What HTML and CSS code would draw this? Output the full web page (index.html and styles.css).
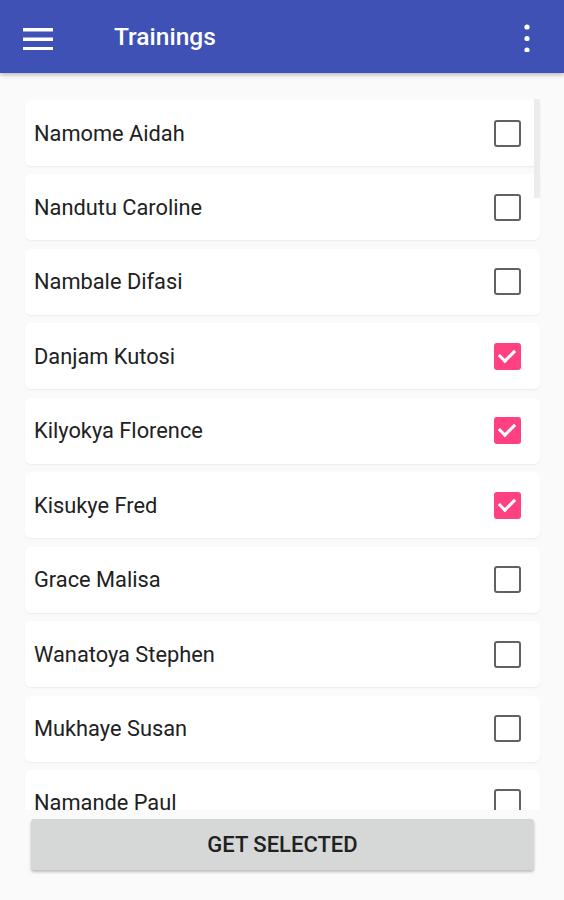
FILE: index.html
```html
<!DOCTYPE html>
<html lang="en">
<head>
    <meta charset="UTF-8">
    <meta name="viewport" content="width=device-width, initial-scale=1.0">
    <title>Trainings</title>
    <link rel="stylesheet" href="styles.css">
</head>
<body>
    <header class="appbar">
        <button class="menu-btn" aria-label="Menu">
            <svg width="30" height="24" viewBox="0 0 30 24">
                <rect x="0" y="2" width="30" height="3.5" fill="#fff"/>
                <rect x="0" y="11.5" width="30" height="3.5" fill="#fff"/>
                <rect x="0" y="21" width="30" height="3.5" fill="#fff"/>
            </svg>
        </button>
        <h1 class="title">Trainings</h1>
        <button class="more-btn" aria-label="More options">
            <svg width="6" height="28" viewBox="0 0 6 28">
                <circle cx="3" cy="3" r="2.6" fill="#fff"/>
                <circle cx="3" cy="14.5" r="2.6" fill="#fff"/>
                <circle cx="3" cy="26" r="2.6" fill="#fff"/>
            </svg>
        </button>
    </header>

    <main class="list">
        <div class="scrollbar"></div>
        <label class="card"><span class="name">Namome Aidah</span><input type="checkbox"><span class="box"></span></label>
        <label class="card"><span class="name">Nandutu Caroline</span><input type="checkbox"><span class="box"></span></label>
        <label class="card"><span class="name">Nambale Difasi</span><input type="checkbox"><span class="box"></span></label>
        <label class="card"><span class="name">Danjam Kutosi</span><input type="checkbox" checked><span class="box"></span></label>
        <label class="card"><span class="name">Kilyokya Florence</span><input type="checkbox" checked><span class="box"></span></label>
        <label class="card"><span class="name">Kisukye Fred</span><input type="checkbox" checked><span class="box"></span></label>
        <label class="card"><span class="name">Grace Malisa</span><input type="checkbox"><span class="box"></span></label>
        <label class="card"><span class="name">Wanatoya Stephen</span><input type="checkbox"><span class="box"></span></label>
        <label class="card"><span class="name">Mukhaye Susan</span><input type="checkbox"><span class="box"></span></label>
        <label class="card"><span class="name">Namande Paul</span><input type="checkbox"><span class="box"></span></label>
    </main>

    <div class="actions">
        <button class="get-btn">GET SELECTED</button>
    </div>
</body>
</html>
```

FILE: styles.css
```css
body {
    margin: 0;
    font-family: Roboto, "Noto Sans", sans-serif;
    background-color: #fafafa;
    width: 564px;
    height: 900px;
    overflow: hidden;
}
.appbar {
    height: 73px;
    background-color: #3f51b5;
    display: flex;
    align-items: center;
    padding: 0 34px 0 23px;
    box-shadow: 0 2px 4px rgba(0,0,0,0.25);
    position: relative;
    z-index: 2;
}
.menu-btn, .more-btn {
    background: none;
    border: none;
    padding: 0;
    display: flex;
    cursor: pointer;
}
.menu-btn {
    margin-top: 2px;
}
.more-btn {
    margin-top: 3px;
}
.title {
    flex: 1;
    margin: 0 0 0 61px;
    color: white;
    font-size: 24.5px;
    font-weight: 500;
}
.list {
    height: 710px;
    padding: 27px 24px 0 25px;
    overflow: hidden;
    display: flex;
    flex-direction: column;
    gap: 8.45px;
    position: relative;
}
.scrollbar {
    position: absolute;
    top: 26px;
    right: 24px;
    width: 6px;
    height: 99px;
    background: #ececec;
}
.card {
    flex: none;
    height: 66px;
    background: white;
    border-radius: 6px;
    box-shadow: 0 1px 2px rgba(0,0,0,0.06);
    display: flex;
    align-items: center;
    padding: 0 19px 0 9px;
    cursor: pointer;
}
.name {
    flex: 1;
    font-size: 21.8px;
    color: #212121;
}
.card input {
    display: none;
}
.box {
    width: 23px;
    height: 23px;
    border: 2.5px solid #616161;
    border-radius: 3px;
    position: relative;
}
.card input:checked + .box {
    background: #ff4081;
    border-color: #ff4081;
}
.card input:checked + .box::after {
    content: "";
    position: absolute;
    left: 6px;
    top: 1px;
    width: 7px;
    height: 13px;
    border: solid white;
    border-width: 0 3px 3px 0;
    transform: rotate(45deg);
}
.actions {
    padding: 9px 30px 0 31px;
    position: relative;
    z-index: 1;
}
.get-btn {
    width: 100%;
    height: 51px;
    border: none;
    border-radius: 3px;
    background-color: #d6d7d7;
    box-shadow: 0 2px 3px rgba(0,0,0,0.25);
    font-family: Roboto, sans-serif;
    font-size: 22px;
    font-weight: 500;
    color: #212121;
    cursor: pointer;
}
```
